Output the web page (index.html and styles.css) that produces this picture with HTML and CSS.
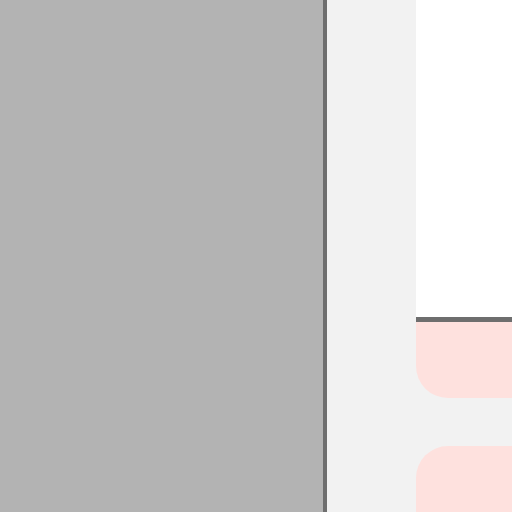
FILE: index.html
```html
<!DOCTYPE html>
<html>
<head>
<meta charset="utf-8">
<link rel="stylesheet" href="styles.css">
</head>
<body>
<div class="app">
  <div class="canvas"></div>
  <div class="rail"></div>
  <div class="side">
    <div class="preview"></div>
    <div class="card card-top"></div>
    <div class="card card-bottom"></div>
  </div>
</div>
</body>
</html>
```
FILE: styles.css
```css
html, body {
  margin: 0;
  padding: 0;
  width: 512px;
  height: 512px;
  overflow: hidden;
  background: #f2f2f2;
  font-family: "Liberation Sans", sans-serif;
}
.app {
  display: flex;
  width: 512px;
  height: 512px;
}
.canvas {
  width: 323px;
  flex: none;
  background: #b3b3b3;
  border-right: 4px solid #6e6e6e;
}
.rail {
  width: 89px;
  flex: none;
  background: #f2f2f2;
}
.side {
  flex: 1;
  display: flex;
  flex-direction: column;
  background: #f2f2f2;
}
.preview {
  height: 317px;
  flex: none;
  background: #ffffff;
  border-bottom: 5px solid #6e6e6e;
}
.card {
  background: #fee1de;
  flex: none;
}
.card-top {
  height: 76px;
  border-bottom-left-radius: 32px;
}
.card-bottom {
  margin-top: 48px;
  height: 80px;
  border-top-left-radius: 32px;
}
```
